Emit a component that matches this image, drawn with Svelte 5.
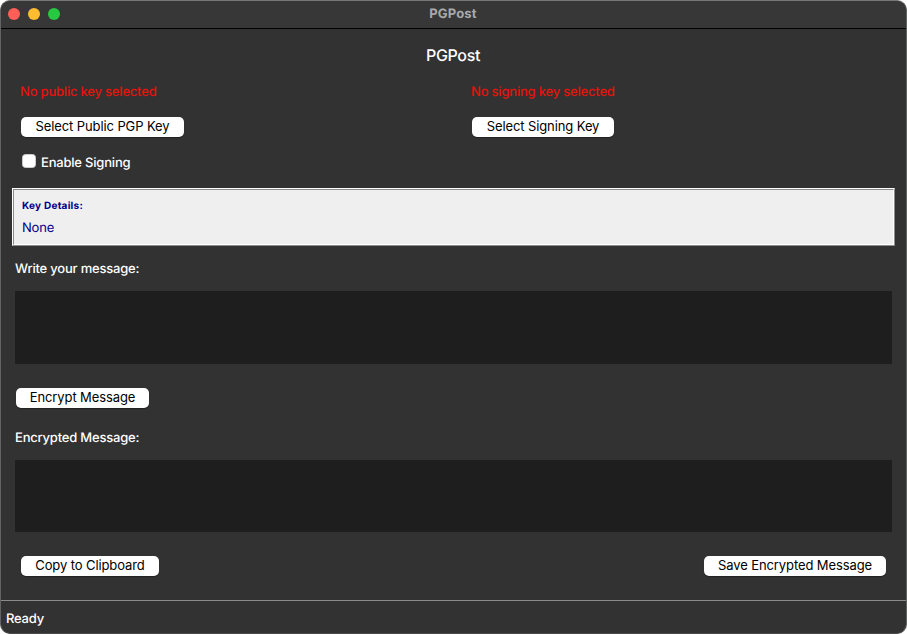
<script>
  let signing = $state(false);
  let message = $state('');
  let encrypted = $state('');
</script>

<main class="window">
  <header class="titlebar">
    <div class="lights"><i class="close"></i><i class="minimize"></i><i class="zoom"></i></div>
    <span class="caption">PGPost</span>
  </header>
  <div class="content">
    <h1><span>PGPost</span></h1>
    <section class="keys">
      <div class="key">
        <p class="missing">No public key selected</p>
        <button class="pick-public">Select Public PGP Key</button>
        <label class="check"><input type="checkbox" bind:checked={signing} /><span>Enable Signing</span></label>
      </div>
      <div class="key">
        <p class="missing">No signing key selected</p>
        <button class="pick-signing">Select Signing Key</button>
      </div>
    </section>
    <section class="details">
      <div class="inner">
        <strong>Key Details:</strong>
        <span>None</span>
      </div>
    </section>
    <p class="label write">Write your message:</p>
    <textarea class="input" bind:value={message}></textarea>
    <button class="encrypt">Encrypt Message</button>
    <p class="label result">Encrypted Message:</p>
    <textarea class="output" bind:value={encrypted}></textarea>
    <div class="actions">
      <button class="copy">Copy to Clipboard</button>
      <button class="save">Save Encrypted Message</button>
    </div>
  </div>
  <footer><span>Ready</span></footer>
</main>

<style>
  :global(body) { background: #fff; }
  .window {
    box-sizing: border-box;
    width: 907px;
    height: 634px;
    display: flex;
    flex-direction: column;
    border: 1px solid #626363;
    border-top-color: #777;
    border-bottom-color: #4b4b4b;
    border-radius: 10px;
    overflow: hidden;
    background: #323232;
    color: #fff;
    font: 550 13px/16px Inter, sans-serif;
    letter-spacing: -0.2px;
    text-rendering: geometricPrecision;
  }
  p, h1 { margin: 0; font-weight: 550; white-space: nowrap; }
  .titlebar {
    box-sizing: border-box;
    flex: none;
    height: 28px;
    display: grid;
    grid-template-columns: 1fr auto 1fr;
    align-items: center;
    border-bottom: 1px solid #000;
    background: #373737;
  }
  .lights { display: flex; gap: 8px; padding: 0 0 1px 7px; }
  .lights i { width: 12px; height: 12px; border-radius: 50%; }
  .close { background: #ff5f57; }
  .minimize { background: #febc2e; }
  .zoom { background: #28c840; }
  .caption { padding: 0 1px 2px 0; color: #a9a9a9; font-weight: 700; letter-spacing: 0.15px; }
  .content {
    flex: 1;
    display: flex;
    flex-direction: column;
    align-items: flex-start;
    padding: 0 11px;
  }
  h1 {
    align-self: stretch;
    margin: 16px 1px 0 0;
    font-size: 16px;
    line-height: 20px;
    text-align: center;
    letter-spacing: -0.35px;
  }
  .keys {
    align-self: stretch;
    display: flex;
    height: 123px;
  }
  .key {
    flex: none;
    width: 451px;
    box-sizing: border-box;
    padding: 19px 0 0 8px;
    display: flex;
    flex-direction: column;
    align-items: flex-start;
  }
  .missing { color: #e6120c; }
  button {
    flex: none;
    height: 20px;
    border: 0;
    border-radius: 5px;
    background: #fff;
    color: #000;
    font: 400 13px/18px Inter, sans-serif;
    letter-spacing: -0.1px;
    padding: 0 0 2px;
    text-align: center;
    white-space: nowrap;
    box-shadow: 0 1px 1px rgb(0 0 0 / 35%);
  }
  .key button { margin: 17px 0 0 1px; }
  .pick-public { width: 163px; }
  .pick-signing { width: 142px; }
  .check {
    display: flex;
    align-items: flex-start;
    gap: 5px;
    margin: 18px 0 0 2px;
  }
  .check input {
    appearance: none;
    width: 14px;
    height: 14px;
    margin: -1px 0 0;
    border-radius: 3.5px;
    border: 0.5px solid #ccc;
    background: #fff;
  }
  .details {
    align-self: stretch;
    height: 58px;
    box-sizing: border-box;
    border: 1px solid;
    border-color: #fff #8c8c8c #8c8c8c #fff;
  }
  .inner {
    height: 100%;
    box-sizing: border-box;
    border: 1px solid;
    border-color: #8c8c8c #fff #fff #8c8c8c;
    background: #efefef;
    color: #00008b;
    padding: 9px 8px 0;
    display: flex;
    flex-direction: column;
    gap: 7px;
  }
  .inner strong { font-size: 10px; font-weight: 700; line-height: 14px; letter-spacing: 0.25px; }
  .inner span { font-weight: 400; letter-spacing: -0.2px; }
  .label { margin-left: 3px; }
  .write { margin-top: 15px; }
  textarea {
    flex: none;
    box-sizing: border-box;
    width: 877px;
    margin: 14px 0 0 3px;
    padding: 3px;
    border: 0;
    outline: none;
    resize: none;
    background: #1e1e1e;
    color: #fff;
    font: inherit;
  }
  .input { height: 73px; }
  .output { height: 72px; }
  .encrypt { width: 133px; margin: 24px 0 0 4px; }
  .result { margin-top: 22px; }
  .actions {
    align-self: stretch;
    display: flex;
    justify-content: space-between;
    padding: 24px 9px 0;
  }
  .actions .copy { width: 138px; }
  .actions .save { width: 182px; }
  footer {
    flex: none;
    height: 33px;
    box-sizing: border-box;
    border-top: 1px solid #8a8a8a;
    padding: 10px 5px 0;
  }
</style>
